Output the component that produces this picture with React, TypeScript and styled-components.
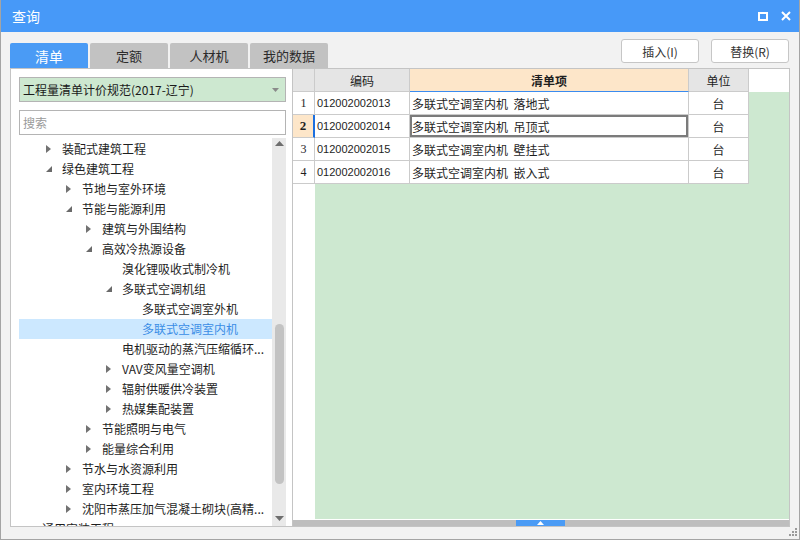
import React from 'react';
import styled, { createGlobalStyle, css } from 'styled-components';

const GlobalStyle = createGlobalStyle`
  html, body { margin: 0; padding: 0; background: #ffffff; }
  body {
    font-family: "Noto Sans CJK SC", "Microsoft YaHei", "Noto Sans", sans-serif;
    font-size: 12px;
    color: #1e1e1e;
  }
  * { box-sizing: border-box; }
`;

const Window = styled.div`
  width: 800px;
  height: 540px;
  display: flex;
  flex-direction: column;
  background: #f2f2f2;
  border: 1px solid #a4a4a4;
  border-top: 0;
  overflow: hidden;
`;

const TitleBar = styled.div`
  height: 32px;
  flex: none;
  background: #4799f8;
  display: flex;
  align-items: center;
  padding: 0 8px 0 11px;
  color: #ffffff;
`;

const Title = styled.div`
  flex: 1;
  font-size: 14px;
  line-height: 32px;
`;

const TitleButtons = styled.div`
  display: flex;
  align-items: center;
  gap: 13px;
`;

const Toolbar = styled.div`
  height: 36px;
  flex: none;
  display: flex;
  align-items: flex-end;
  padding: 0 10px 0 9px;
`;

const Tabs = styled.div`
  display: flex;
  gap: 2px;
  flex: 1;
`;

const Tab = styled.div<{ $active?: boolean }>`
  width: 78px;
  height: 25px;
  display: flex;
  align-items: center;
  justify-content: center;
  font-size: 13px;
  border-radius: 2px 2px 0 0;
  ${(p) =>
    p.$active
      ? css`
          background: #4a9bf5;
          color: #ffffff;
          font-size: 14px;
        `
      : css`
          background: #c2c2c2;
          color: #2b2b2b;
        `}
`;

const ButtonGroup = styled.div`
  align-self: flex-start;
  margin-top: 7px;
  display: flex;
  gap: 12px;
`;

const Button = styled.div`
  width: 78px;
  height: 24px;
  background: #ffffff;
  border: 1px solid #c6c6c6;
  border-radius: 3px;
  display: flex;
  align-items: center;
  justify-content: center;
  font-size: 12px;
  color: #333333;
`;

const Main = styled.div`
  margin: 0 9px;
  height: 459px;
  flex: none;
  border: 1px solid #c4c4c4;
  display: flex;
`;

const LeftPanel = styled.div`
  width: 282px;
  flex: none;
  background: #ffffff;
  border-right: 1px solid #c4c4c4;
  display: flex;
  flex-direction: column;
  padding: 8px 6px 0 8px;
`;

const Select = styled.div`
  height: 25px;
  flex: none;
  background: #cde8d0;
  border: 1px solid #b4b4b4;
  display: flex;
  align-items: center;
  padding: 0 6px 0 3px;
  font-size: 12px;
  color: #1a1a1a;
`;

const SelectText = styled.div`
  flex: 1;
`;

const SearchBox = styled.div`
  height: 25px;
  flex: none;
  margin-top: 8px;
  background: #ffffff;
  border: 1px solid #b4b4b4;
  display: flex;
  align-items: center;
  padding: 0 3px;
  color: #9a9a9a;
  font-size: 12px;
`;

const TreeArea = styled.div`
  flex: 1;
  margin-top: 3px;
  display: flex;
  min-height: 0;
`;

const TreeList = styled.div`
  flex: 1;
  overflow: hidden;
  padding-top: 1px;
`;

const TreeRow = styled.div<{ $level: number; $selected?: boolean }>`
  height: 20px;
  display: flex;
  align-items: center;
  padding-left: ${(p) => p.$level * 20 + 4}px;
  white-space: nowrap;
  font-size: 12px;
  line-height: 20px;
  color: ${(p) => (p.$selected ? '#3a8de6' : '#1e1e1e')};
  background: ${(p) => (p.$selected ? '#cce8ff' : 'transparent')};
`;

const ArrowSlot = styled.div`
  width: 19px;
  flex: none;
  display: flex;
  align-items: center;
  padding-left: 3px;
`;

const VScroll = styled.div`
  width: 14px;
  flex: none;
  background: #e9e9e9;
  display: flex;
  flex-direction: column;
  align-items: center;
`;

const ScrollBtn = styled.div<{ $down?: boolean }>`
  height: 16px;
  flex: none;
  display: flex;
  justify-content: center;
  align-items: ${(p) => (p.$down ? 'center' : 'flex-start')};
  padding-top: ${(p) => (p.$down ? '0' : '3px')};
`;

const ScrollSpacer = styled.div<{ $h?: number }>`
  ${(p) => (p.$h ? `height: ${p.$h}px; flex: none;` : 'flex: 1;')}
`;

const VThumb = styled.div`
  width: 9px;
  height: 160px;
  flex: none;
  border-radius: 5px;
  background: #c3c3c3;
`;

const RightPanel = styled.div`
  flex: 1;
  background: #ffffff;
  display: flex;
  flex-direction: column;
`;

const HeaderRow = styled.div`
  height: 23px;
  flex: none;
  display: flex;
`;

const HeadCell = styled.div<{ $w: number; $hl?: boolean }>`
  width: ${(p) => p.$w}px;
  flex: none;
  display: flex;
  align-items: center;
  justify-content: center;
  font-size: 12px;
  color: #1e1e1e;
  border-right: 1px solid #cbcbcb;
  border-bottom: 1px solid ${(p) => (p.$hl ? '#3b8bef' : '#cbcbcb')};
  background: ${(p) => (p.$hl ? '#fde6c9' : '#e5e5e5')};
  font-weight: ${(p) => (p.$hl ? 700 : 400)};
`;

const TableBody = styled.div`
  flex: 1;
  display: flex;
  min-height: 0;
`;

const RowNumCol = styled.div`
  width: 22px;
  flex: none;
  background: #ffffff;
`;

const RowNum = styled.div<{ $active?: boolean }>`
  height: 23px;
  display: flex;
  align-items: center;
  justify-content: center;
  font-family: "Liberation Serif", "Times New Roman", serif;
  font-size: 12px;
  border-bottom: 1px solid #cbcbcb;
  ${(p) =>
    p.$active
      ? css`
          background: #fde6c9;
          border-right: 2px solid #1b6fe0;
          font-weight: 700;
          font-size: 13px;
        `
      : css`
          border-right: 1px solid #cbcbcb;
        `}
`;

const DataArea = styled.div`
  flex: 1;
  background: #cde8d0;
`;

const DataRow = styled.div`
  display: flex;
  height: 23px;
`;

const Cell = styled.div<{ $w: number; $center?: boolean; $code?: boolean; $focus?: boolean }>`
  width: ${(p) => p.$w}px;
  flex: none;
  background: #ffffff;
  display: flex;
  align-items: center;
  justify-content: ${(p) => (p.$center ? 'center' : 'flex-start')};
  padding-left: ${(p) => (p.$center ? 0 : 2)}px;
  border-right: 1px solid #cbcbcb;
  border-bottom: 1px solid #cbcbcb;
  white-space: pre;
  font-size: ${(p) => (p.$code ? 11 : 12)}px;
  font-family: ${(p) =>
    p.$code
      ? '"Liberation Sans", Arial, sans-serif'
      : '"Noto Sans CJK SC", "Microsoft YaHei", sans-serif'};
  ${(p) =>
    p.$focus &&
    css`
      box-shadow: inset 0 0 0 2px #7b7b7b;
    `}
`;

const Gap = styled.div`
  height: 1px;
  flex: none;
`;

const HScroll = styled.div`
  height: 6px;
  flex: none;
  background: #bebebe;
  display: flex;
`;

const HThumb = styled.div`
  margin-left: 223px;
  width: 49px;
  height: 6px;
  background: #4a9bf5;
  display: flex;
  align-items: center;
  justify-content: center;
`;

const Footer = styled.div`
  flex: 1;
  display: flex;
  justify-content: flex-end;
  align-items: flex-end;
  padding: 0 1px 2px 0;
`;

type Node = { l: number; t: string; a?: 'c' | 'e'; sel?: boolean };

const tree: Node[] = [
  { l: 1, t: '装配式建筑工程', a: 'c' },
  { l: 1, t: '绿色建筑工程', a: 'e' },
  { l: 2, t: '节地与室外环境', a: 'c' },
  { l: 2, t: '节能与能源利用', a: 'e' },
  { l: 3, t: '建筑与外围结构', a: 'c' },
  { l: 3, t: '高效冷热源设备', a: 'e' },
  { l: 4, t: '溴化锂吸收式制冷机' },
  { l: 4, t: '多联式空调机组', a: 'e' },
  { l: 5, t: '多联式空调室外机' },
  { l: 5, t: '多联式空调室内机', sel: true },
  { l: 4, t: '电机驱动的蒸汽压缩循环...' },
  { l: 4, t: 'VAV变风量空调机', a: 'c' },
  { l: 4, t: '辐射供暖供冷装置', a: 'c' },
  { l: 4, t: '热媒集配装置', a: 'c' },
  { l: 3, t: '节能照明与电气', a: 'c' },
  { l: 3, t: '能量综合利用', a: 'c' },
  { l: 2, t: '节水与水资源利用', a: 'c' },
  { l: 2, t: '室内环境工程', a: 'c' },
  { l: 2, t: '沈阳市蒸压加气混凝土砌块(高精...', a: 'c' },
  { l: 0, t: '通用安装工程', a: 'e' },
];

const rows = [
  { code: '012002002013', name: '多联式空调室内机  落地式' },
  { code: '012002002014', name: '多联式空调室内机  吊顶式' },
  { code: '012002002015', name: '多联式空调室内机  壁挂式' },
  { code: '012002002016', name: '多联式空调室内机  嵌入式' },
];

const Collapsed = () => (
  <svg width="5" height="8" viewBox="0 0 5 8">
    <polygon points="0,0 5,4 0,8" fill="#727272" />
  </svg>
);

const Expanded = () => (
  <svg width="6" height="6" viewBox="0 0 6 6">
    <polygon points="6,0 6,6 0,6" fill="#6a6a6a" />
  </svg>
);

export default function App() {
  return (
    <>
      <GlobalStyle />
      <Window>
        <TitleBar>
          <Title>查询</Title>
          <TitleButtons>
            <svg width="10" height="9" viewBox="0 0 10 9">
              <rect x="1" y="1" width="8" height="7" fill="none" stroke="#ffffff" strokeWidth="2" />
            </svg>
            <svg width="10" height="10" viewBox="0 0 10 10">
              <path d="M1 1 L9 9 M9 1 L1 9" stroke="#ffffff" strokeWidth="2" />
            </svg>
          </TitleButtons>
        </TitleBar>
        <Toolbar>
          <Tabs>
            <Tab $active>清单</Tab>
            <Tab>定额</Tab>
            <Tab>人材机</Tab>
            <Tab>我的数据</Tab>
          </Tabs>
          <ButtonGroup>
            <Button>插入(I)</Button>
            <Button>替换(R)</Button>
          </ButtonGroup>
        </Toolbar>
        <Main>
          <LeftPanel>
            <Select>
              <SelectText>工程量清单计价规范(2017-辽宁)</SelectText>
              <svg width="7" height="4" viewBox="0 0 7 4">
                <polygon points="0,0 7,0 3.5,4" fill="#8a8a8a" />
              </svg>
            </Select>
            <SearchBox>搜索</SearchBox>
            <TreeArea>
              <TreeList>
                {tree.map((n, i) => (
                  <TreeRow key={i} $level={n.l} $selected={n.sel}>
                    <ArrowSlot>
                      {n.a === 'c' && <Collapsed />}
                      {n.a === 'e' && <Expanded />}
                    </ArrowSlot>
                    <span>{n.t}</span>
                  </TreeRow>
                ))}
              </TreeList>
              <VScroll>
                <ScrollBtn>
                  <svg width="9" height="5" viewBox="0 0 9 5">
                    <polygon points="0,5 9,5 4.5,0" fill="#6e6e6e" />
                  </svg>
                </ScrollBtn>
                <ScrollSpacer $h={170} />
                <VThumb />
                <ScrollSpacer />
                <ScrollBtn $down>
                  <svg width="9" height="5" viewBox="0 0 9 5">
                    <polygon points="0,0 9,0 4.5,5" fill="#6e6e6e" />
                  </svg>
                </ScrollBtn>
              </VScroll>
            </TreeArea>
          </LeftPanel>
          <RightPanel>
            <HeaderRow>
              <HeadCell $w={22} />
              <HeadCell $w={95}>编码</HeadCell>
              <HeadCell $w={279} $hl>
                清单项
              </HeadCell>
              <HeadCell $w={60}>单位</HeadCell>
            </HeaderRow>
            <TableBody>
              <RowNumCol>
                {rows.map((r, i) => (
                  <RowNum key={r.code} $active={i === 1}>
                    {i + 1}
                  </RowNum>
                ))}
              </RowNumCol>
              <DataArea>
                {rows.map((r, i) => (
                  <DataRow key={r.code}>
                    <Cell $w={95} $code>
                      {r.code}
                    </Cell>
                    <Cell $w={279} $focus={i === 1}>
                      {r.name}
                    </Cell>
                    <Cell $w={60} $center>
                      台
                    </Cell>
                  </DataRow>
                ))}
              </DataArea>
            </TableBody>
            <Gap />
            <HScroll>
              <HThumb>
                <svg width="7" height="4" viewBox="0 0 7 4">
                  <polygon points="0,4 7,4 3.5,0" fill="#ffffff" />
                </svg>
              </HThumb>
            </HScroll>
          </RightPanel>
        </Main>
        <Footer>
          <svg width="9" height="9" viewBox="0 0 9 9">
            <rect x="6" y="0" width="2" height="2" fill="#9a9a9a" />
            <rect x="3" y="3" width="2" height="2" fill="#9a9a9a" />
            <rect x="6" y="3" width="2" height="2" fill="#9a9a9a" />
            <rect x="0" y="6" width="2" height="2" fill="#9a9a9a" />
            <rect x="3" y="6" width="2" height="2" fill="#9a9a9a" />
            <rect x="6" y="6" width="2" height="2" fill="#9a9a9a" />
          </svg>
        </Footer>
      </Window>
    </>
  );
}
